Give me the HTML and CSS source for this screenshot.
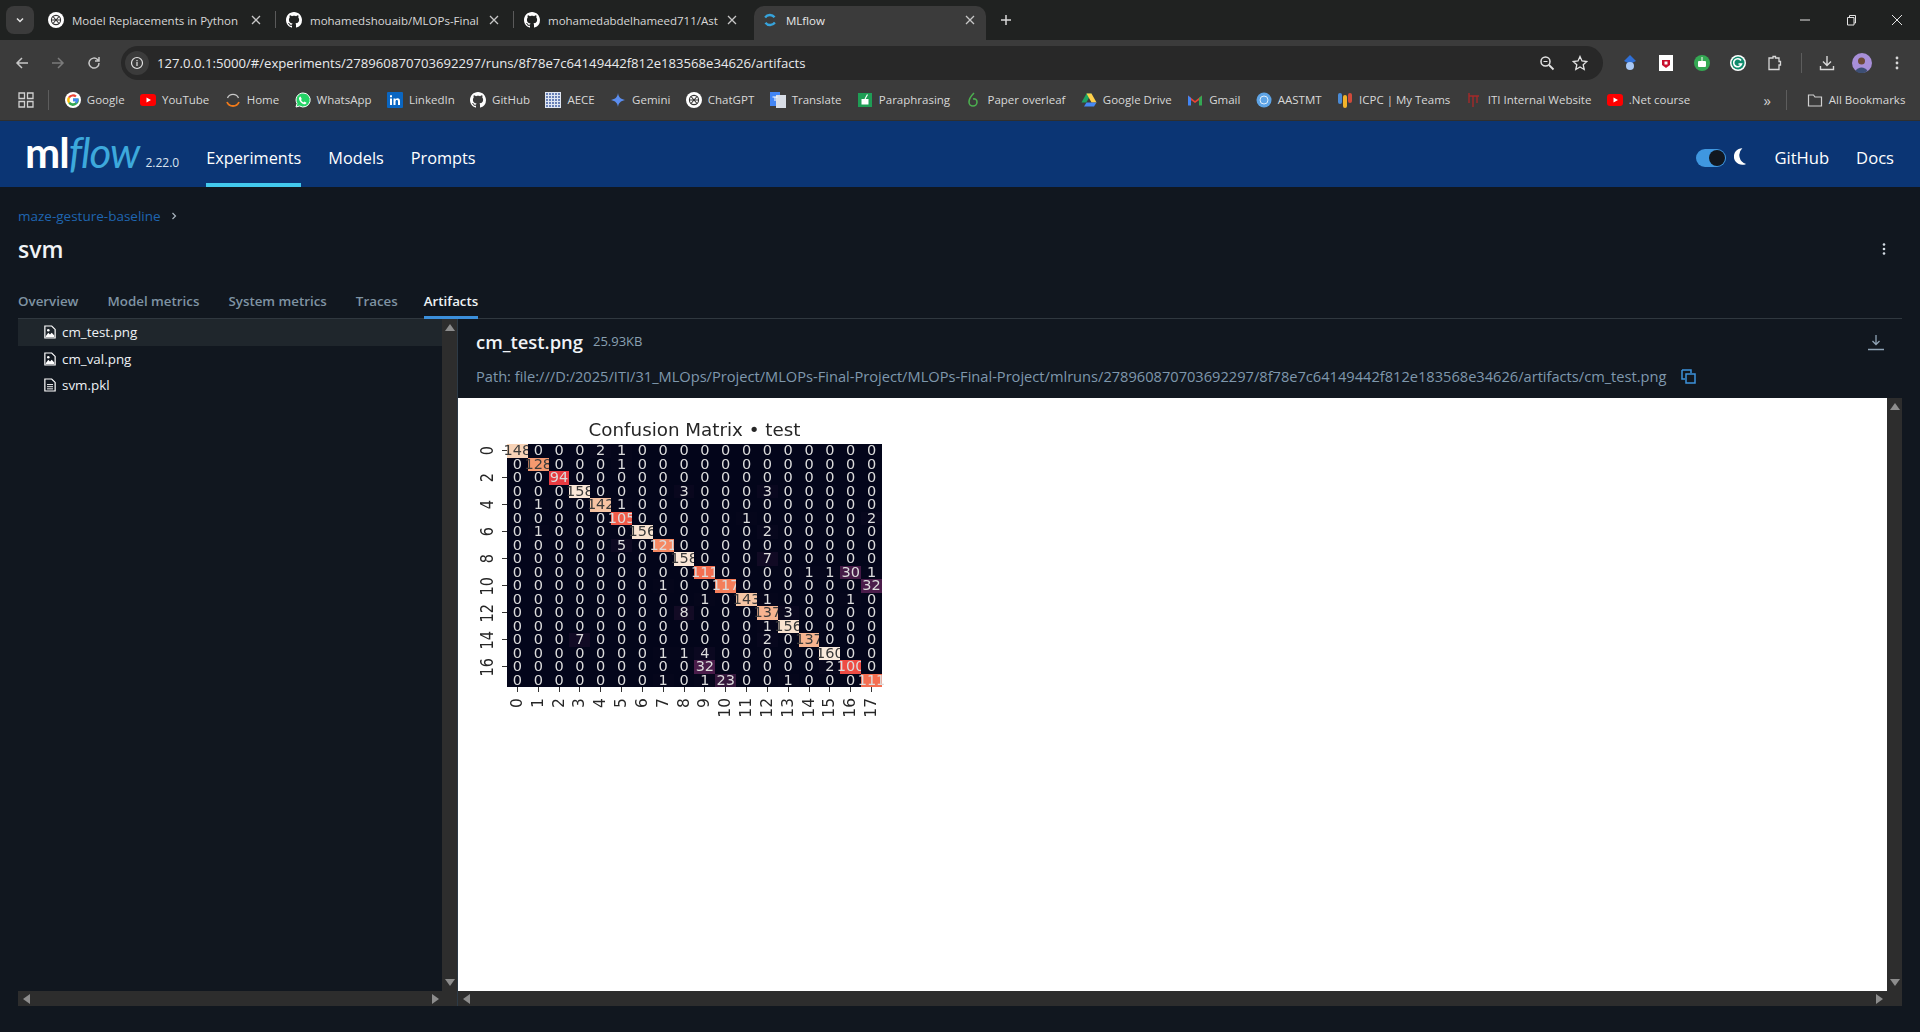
FILE: index.html
```html
<!DOCTYPE html>
<html lang="en">
<head>
	<meta charset="UTF-8">
	<title>MLflow</title>
	<link rel="stylesheet" href="styles.css">
</head>
<body>
	<svg class="defs" width="0" height="0">
		<symbol id="gh" viewBox="0 0 16 16"><path fill="#fff" d="M8 0C3.58 0 0 3.58 0 8c0 3.54 2.29 6.53 5.47 7.59.4.07.55-.17.55-.38 0-.19-.01-.82-.01-1.49-2.01.37-2.53-.49-2.69-.94-.09-.23-.48-.94-.82-1.13-.28-.15-.68-.52-.01-.53.63-.01 1.08.58 1.23.82.72 1.21 1.87.87 2.33.66.07-.52.28-.87.51-1.07-1.78-.2-3.64-.89-3.64-3.95 0-.87.31-1.59.82-2.15-.08-.2-.36-1.02.08-2.12 0 0 .67-.21 2.2.82.64-.18 1.32-.27 2-.27s1.36.09 2 .27c1.53-1.04 2.2-.82 2.2-.82.44 1.1.16 1.92.08 2.12.51.56.82 1.27.82 2.15 0 3.07-1.87 3.75-3.65 3.95.29.25.54.73.54 1.48 0 1.07-.01 1.93-.01 2.2 0 .21.15.46.55.38A8.013 8.013 0 0 0 16 8c0-4.42-3.58-8-8-8z"/></symbol>
		<symbol id="gpt" viewBox="0 0 16 16"><circle cx="8" cy="8" r="8" fill="#fff"/><g fill="none" stroke="#333" stroke-width="1.1"><circle cx="8" cy="8" r="4.6"/><path d="M5 4.5 11 11.5M11 4.5 5 11.5M3.4 8h9.2"/></g></symbol>
		<symbol id="close" viewBox="0 0 10 10"><path d="M1 1 9 9M9 1 1 9" stroke="#c7c7c7" stroke-width="1.3"/></symbol>
		<symbol id="yt" viewBox="0 0 16 16"><rect y="2" width="16" height="12" rx="3" fill="#f00"/><path d="M6.5 5.5v5L11 8z" fill="#fff"/></symbol>
		<symbol id="img" viewBox="0 0 14 16"><path d="M1 1h8l4 4v10H1z" fill="none" stroke="#fff" stroke-width="1.4"/><path d="M2 13l3-4 2 2 2-2 3 3v2H2z" fill="#fff"/><circle cx="5" cy="6" r="1.5" fill="#fff"/></symbol>
		<symbol id="doc" viewBox="0 0 14 16"><path d="M1 1h8l4 4v10H1z" fill="none" stroke="#fff" stroke-width="1.4"/><path d="M3.5 7.5h7M3.5 10h7M3.5 12.5h7" stroke="#fff" stroke-width="1.1"/></symbol>
	</svg>

	<div class="tabstrip">
		<button class="tab-menu"><svg class="i10" viewBox="0 0 10 10"><path d="M2 3.5 5 6.5 8 3.5" fill="none" stroke="#e3e3e3" stroke-width="1.5"/></svg></button>
		<div class="tab"><svg class="i16"><use href="#gpt"/></svg><span class="tab-title">Model Replacements in Python</span><svg class="tab-x"><use href="#close"/></svg></div>
		<div class="tab tab-sep"><svg class="i16"><use href="#gh"/></svg><span class="tab-title">mohamedshouaib/MLOPs-Final</span><svg class="tab-x"><use href="#close"/></svg></div>
		<div class="tab tab-sep"><svg class="i16"><use href="#gh"/></svg><span class="tab-title">mohamedabdelhameed711/Ast</span><svg class="tab-x"><use href="#close"/></svg></div>
		<div class="tab tab-active">
			<svg class="i16" viewBox="0 0 16 16"><path d="M13.5 4.500A7 7 0 0 0 2.200 4.800L4 6.300A4.600 4.600 0 0 1 11.600 6z" fill="#36a3dc"/><path d="M2.500 11.500A7 7 0 0 0 13.800 11.200L12 9.700A4.600 4.600 0 0 1 4.400 10z" fill="#36a3dc"/></svg>
			<span class="tab-title">MLflow</span><svg class="tab-x"><use href="#close"/></svg>
		</div>
		<svg class="new-tab" viewBox="0 0 12 12"><path d="M6 1v10M1 6h10" stroke="#d8d8d8" stroke-width="1.5"/></svg>
		<div class="win-controls">
			<svg class="i12" viewBox="0 0 12 12"><path d="M1 6h10" stroke="#e3e3e3"/></svg>
			<svg class="i12" viewBox="0 0 12 12"><path d="M2.500 3.500h6.500v7.500h-6.500zM4.500 3.500V1.500h6v7.500H9" fill="none" stroke="#e3e3e3"/></svg>
			<svg class="i12" viewBox="0 0 12 12"><path d="M1 1 11 11M11 1 1 11" stroke="#e3e3e3"/></svg>
		</div>
	</div>

	<div class="toolbar">
		<svg class="i16" viewBox="0 0 16 16"><path d="M14 8H3M8 3 3 8l5 5" fill="none" stroke="#c7c7c7" stroke-width="1.500"/></svg>
		<svg class="i16" viewBox="0 0 16 16"><path d="M2 8h11M8 3l5 5-5 5" fill="none" stroke="#7b7b7b" stroke-width="1.500"/></svg>
		<svg class="i16" viewBox="0 0 16 16"><path d="M13 8a5 5 0 1 1-1.500-3.500L13 6M13 2v4H9" fill="none" stroke="#c7c7c7" stroke-width="1.500"/></svg>
		<div class="omnibox">
			<span class="site-info"><svg class="i14" viewBox="0 0 14 14"><circle cx="7" cy="7" r="5.500" fill="none" stroke="#e3e3e3" stroke-width="1.200"/><path d="M7 6v4M7 4v1.200" stroke="#e3e3e3" stroke-width="1.200"/></svg></span>
			<span class="url">127.0.0.1:5000/#/experiments/278960870703692297/runs/8f78e7c64149442f812e183568e34626/artifacts</span>
			<svg class="i16" viewBox="0 0 16 16"><circle cx="6.500" cy="6.500" r="4.500" fill="none" stroke="#e3e3e3" stroke-width="1.500"/><path d="M10 10l4.500 4.500" stroke="#e3e3e3" stroke-width="1.800"/><path d="M4.500 6.500h4" stroke="#e3e3e3"/></svg>
			<svg class="i16" viewBox="0 0 16 16"><path d="M8 1.500 10 6l4.800.500-3.600 3.200 1 4.800L8 12l-4.200 2.500 1-4.800L1.200 6.500 6 6z" fill="none" stroke="#e3e3e3" stroke-width="1.300"/></svg>
		</div>
		<div class="extensions">
			<svg class="i16" viewBox="0 0 16 16"><path d="M8 0 14 6 8 9 2 6z" fill="#2f6fd6"/><circle cx="8" cy="11" r="4" fill="#a9c8f5"/></svg>
			<svg class="i16" viewBox="0 0 16 16"><rect x="1" width="14" height="16" fill="#fff"/><path d="M4 5h8v5l-4 3-4-3z" fill="#c8102e"/><path d="M6.500 6.500h3v3h-3z" fill="#fff"/></svg>
			<svg class="i16" viewBox="0 0 16 16"><circle cx="8" cy="8" r="8" fill="#34a853"/><rect x="4" y="6" width="8" height="6" rx="1" fill="#fff"/><path d="M8 2v4" stroke="#fff"/></svg>
			<svg class="i16" viewBox="0 0 16 16"><circle cx="8" cy="8" r="8" fill="#fff"/><circle cx="8" cy="8" r="6.500" fill="#0f8a6c"/><path d="M11 5.500A4 4 0 1 0 11.500 9H8.500" fill="none" stroke="#fff" stroke-width="1.600"/></svg>
			<svg class="i16" viewBox="0 0 16 16"><path d="M3 3h4V1.500h2.500V3H13v3.500h1.500V10H13v4.500H3z" fill="none" stroke="#d8d8d8" stroke-width="1.300"/></svg>
			<span class="bar-sep ext-sep"></span>
			<div class="ext-tail">
				<svg class="i16" viewBox="0 0 16 16"><path d="M8 1v9M4 6.500 8 10.500l4-4M1.500 11v3.500h13V11" fill="none" stroke="#d8d8d8" stroke-width="1.400"/></svg>
				<svg class="i20" viewBox="0 0 20 20"><circle cx="10" cy="10" r="10" fill="#a88fd8"/><circle cx="9.500" cy="8" r="3.500" fill="#6d4a38"/><path d="M3.500 18a7 7 0 0 1 12 0 10 10 0 0 1-12 0z" fill="#3d4f74"/></svg>
				<svg class="i16" viewBox="0 0 16 16"><circle cx="8" cy="3" r="1.400" fill="#d8d8d8"/><circle cx="8" cy="8" r="1.400" fill="#d8d8d8"/><circle cx="8" cy="13" r="1.400" fill="#d8d8d8"/></svg>
			</div>
		</div>
	</div>

	<div class="bookmarks">
		<svg class="i16 apps" viewBox="0 0 16 16"><path d="M1 1h5.500v5.500H1zM9.500 1H15v5.500H9.500zM1 9.500h5.500V15H1zM9.500 9.500H15V15H9.500z" fill="none" stroke="#d0d0d0" stroke-width="1.300"/></svg>
		<span class="bar-sep"></span>
		<a class="bm"><svg class="i16" viewBox="0 0 16 16"><circle cx="8" cy="8" r="8" fill="#fff"/><path d="M8 6.600h5.500A5.700 5.700 0 0 1 3.200 11.200L5 9.800A3.500 3.500 0 0 0 11 9.200H8z" fill="#34a853"/><path d="M3.200 11.200a5.700 5.700 0 0 1 0-6.400L5 6.200a3.500 3.500 0 0 0 0 3.600z" fill="#fbbc05"/><path d="M3.200 4.800a5.700 5.700 0 0 1 8.500-1L10.200 5.300A3.500 3.500 0 0 0 5 6.200z" fill="#ea4335"/><path d="M8 6.600h5.500a5.700 5.700 0 0 1-2 5L10 10.300A3 3 0 0 0 11 9.200H8z" fill="#4285f4"/></svg>Google</a>
		<a class="bm"><svg class="i16"><use href="#yt"/></svg>YouTube</a>
		<a class="bm"><svg class="i16" viewBox="0 0 16 16"><path d="M2.500 6a6 6 0 0 1 11 0" fill="none" stroke="#c8c8c8" stroke-width="1.300"/><path d="M2 10a6.500 6.500 0 0 0 12 0" fill="none" stroke="#f07a1a" stroke-width="1.800"/></svg>Home</a>
		<a class="bm"><svg class="i16" viewBox="0 0 16 16"><path d="M8 1a7 7 0 0 0-6 10.500L1 15l3.600-1A7 7 0 1 0 8 1z" fill="#25d366" stroke="#fff"/><path d="M5.500 4.500 6.800 7 6 8c.6 1.200 1.400 2 2.500 2.500l1-.900 2 1.200c-.3 1.200-1.500 1.700-2.500 1.400C6.500 11.500 4.500 9.500 4 7c-.2-1.200.5-2.200 1.500-2.500z" fill="#fff"/></svg>WhatsApp</a>
		<a class="bm"><svg class="i16" viewBox="0 0 16 16"><rect width="16" height="16" rx="1" fill="#0a66c2"/><path d="M3 6.500h2V13H3zM3 3.200h2v2H3zM6.500 6.500h2v1c.5-.8 1.200-1.200 2.100-1.200 1.700 0 2.400 1 2.400 2.900V13h-2V9.600c0-1-.3-1.600-1.200-1.600-.9 0-1.300.7-1.300 1.600V13h-2z" fill="#fff"/></svg>LinkedIn</a>
		<a class="bm"><svg class="i16"><use href="#gh"/></svg>GitHub</a>
		<a class="bm"><svg class="i16" viewBox="0 0 16 16"><rect width="16" height="16" fill="#dfe6f2"/><path d="M2 1v14M5 1v14M8 1v14M11 1v14M14 1v14" stroke="#1d3f8f" stroke-width="1.200" stroke-dasharray="2 1"/></svg>AECE</a>
		<a class="bm"><svg class="i16" viewBox="0 0 16 16"><path d="M8 1c.6 4 2.500 6 7 7-4.500 1-6.400 3-7 7-.6-4-2.500-6-7-7 4.500-1 6.400-3 7-7z" fill="#5b8def"/></svg>Gemini</a>
		<a class="bm"><svg class="i16"><use href="#gpt"/></svg>ChatGPT</a>
		<a class="bm"><svg class="i16" viewBox="0 0 16 16"><rect width="10" height="14" fill="#4285f4"/><rect x="6" y="3" width="10" height="13" fill="#d8dde6"/><path d="M2.500 5h5M5 5v4" stroke="#fff"/></svg>Translate</a>
		<a class="bm"><svg class="i16" viewBox="0 0 16 16"><path d="M1 1h14v14H1z" fill="#1f9d55"/><rect x="4.500" y="7" width="7" height="5.500" fill="#fff"/><path d="M8 7 10.500 2.500" stroke="#fff" stroke-width="1.200"/></svg>Paraphrasing</a>
		<a class="bm"><svg class="i16" viewBox="0 0 16 16"><path d="M9 1C6 4 4 6.500 4 10a4 4 0 0 0 8 0c0-2.500-2-3.500-4-3" fill="none" stroke="#4cae4f" stroke-width="1.600"/></svg>Paper overleaf</a>
		<a class="bm"><svg class="i16" viewBox="0 0 16 16"><path d="M5.500 1.500h5L5.300 10.500H.5z" fill="#1fa463"/><path d="M10.500 1.500 15.500 10.500h-5L5.500 1.500z" fill="#ffd04b"/><path d="M3 14.500 5.500 10.500h10l-2.500 4z" fill="#4688f4"/></svg>Google Drive</a>
		<a class="bm"><svg class="i16" viewBox="0 0 16 16"><path d="M1 3.500 8 9l7-5.500V6L8 11 1 6z" fill="#ea4335"/><path d="M1 13.500V3.500L4 6v7.500z" fill="#4285f4"/><path d="M15 13.500V3.500L12 6v7.500z" fill="#34a853"/></svg>Gmail</a>
		<a class="bm"><svg class="i16" viewBox="0 0 16 16"><circle cx="8" cy="8" r="7.500" fill="#5ea4e6"/><circle cx="8" cy="8" r="4" fill="none" stroke="#dcecfb"/></svg>AASTMT</a>
		<a class="bm"><svg class="i16" viewBox="0 0 16 16"><rect x="1" y="1" width="4" height="11" rx="2" fill="#4a8ad4"/><rect x="6" y="3" width="4" height="13" rx="2" fill="#f2b32a"/><rect x="11" y="1" width="4" height="10" rx="2" fill="#d04a3a"/></svg>ICPC | My Teams</a>
		<a class="bm"><svg class="i16" viewBox="0 0 16 16"><path d="M3 1v10M3 4h10M7 4v11M11 4v7" fill="none" stroke="#a52a2a" stroke-width="1.400"/></svg>ITI Internal Website</a>
		<a class="bm"><svg class="i16"><use href="#yt"/></svg>.Net course</a>
		<span class="bm-more">»</span>
		<span class="bar-sep"></span>
		<a class="bm bm-all"><svg class="i16" viewBox="0 0 16 16"><path d="M1.500 3h5l1.500 2h6.500v9h-13z" fill="none" stroke="#d0d0d0" stroke-width="1.200"/></svg>All Bookmarks</a>
	</div>

	<header class="app-header">
		<div class="logo"><span class="logo-ml">ml</span><span class="logo-flow">flow</span></div>
		<span class="version">2.22.0</span>
		<nav class="main-nav">
			<a class="nav-item nav-active">Experiments</a>
			<a class="nav-item">Models</a>
			<a class="nav-item">Prompts</a>
		</nav>
		<div class="header-right">
			<span class="toggle"><span class="knob"></span></span>
			<svg class="moon" viewBox="0 0 14 18"><path d="M9 0A9 9 0 1 0 13 17 10 10 0 0 1 9 0z" fill="#fff"/></svg>
			<a class="head-link">GitHub</a>
			<a class="head-link">Docs</a>
		</div>
	</header>

	<main class="page">
		<div class="crumbs"><a class="crumb">maze-gesture-baseline</a><svg class="crumb-sep" viewBox="0 0 8 10"><path d="M2.500 2 5.500 5 2.500 8" fill="none" stroke="#a9b4be" stroke-width="1.200"/></svg></div>
		<div class="title-row">
			<h1 class="run-name">svm</h1>
			<svg class="i16" viewBox="0 0 16 16"><circle cx="8" cy="3.500" r="1.300" fill="#d5dde4"/><circle cx="8" cy="8" r="1.300" fill="#d5dde4"/><circle cx="8" cy="12.500" r="1.300" fill="#d5dde4"/></svg>
		</div>
		<div class="run-tabs">
			<a class="run-tab">Overview</a>
			<a class="run-tab">Model metrics</a>
			<a class="run-tab">System metrics</a>
			<a class="run-tab">Traces</a>
			<a class="run-tab run-tab-active">Artifacts</a>
		</div>

		<section class="artifacts">
			<div class="tree-col">
				<div class="tree-body">
					<ul class="tree">
						<li class="tree-row tree-row-active"><svg class="file-icon"><use href="#img"/></svg>cm_test.png</li>
						<li class="tree-row"><svg class="file-icon"><use href="#img"/></svg>cm_val.png</li>
						<li class="tree-row"><svg class="file-icon"><use href="#doc"/></svg>svm.pkl</li>
					</ul>
					<div class="vbar"><span class="arr arr-up"></span><span class="arr arr-down"></span></div>
				</div>
				<div class="hbar"><span class="arr arr-left"></span><span class="arr arr-right"></span></div>
			</div>

			<div class="viewer">
				<div class="viewer-head">
					<div class="file-line">
						<span class="file-name">cm_test.png</span>
						<span class="file-size">25.93KB</span>
						<svg class="dl-icon" viewBox="0 0 16 16"><path d="M8 0v9M4.500 6 8 9.500 11.500 6" fill="none" stroke="#8fa3b5" stroke-width="1.300"/><path d="M0 14.500h16" stroke="#8fa3b5" stroke-width="1.500"/></svg>
					</div>
					<div class="path-line">
						<span class="path-text">Path: file:///D:/2025/ITI/31_MLOps/Project/MLOPs-Final-Project/MLOPs-Final-Project/mlruns/278960870703692297/8f78e7c64149442f812e183568e34626/artifacts/cm_test.png</span>
						<svg class="copy-icon" viewBox="0 0 15 15"><path d="M1 1h9v3M4 10H1V1" fill="none" stroke="#3c92dc" stroke-width="1.500"/><path d="M5 5h9v9H5z" fill="none" stroke="#3c92dc" stroke-width="1.500"/></svg>
					</div>
				</div>
				<div class="viewer-body">
					<div class="canvas">
						<div class="figure" id="figure">
							<div class="fig-title">Confusion Matrix • test</div>
							<div class="y-axis" id="yaxis"></div>
							<div class="matrix" id="matrix"></div>
							<div class="x-axis" id="xaxis"></div>
						</div>
					</div>
					<div class="vbar"><span class="arr arr-up"></span><span class="arr arr-down"></span></div>
				</div>
				<div class="hbar"><span class="arr arr-left"></span><span class="arr arr-right arr-right-far"></span></div>
			</div>
		</section>
	</main>
	<script src="matrix.js"></script>
</body>
</html>
```

FILE: styles.css
```css
* {
	box-sizing: border-box;
}
html, body {
	margin: 0;
	height: 100%;
	overflow: hidden;
}
body {
	display: flex;
	flex-direction: column;
	background: #11171f;
	font-family: "Open Sans", "Noto Sans", sans-serif;
	color: #e8ecf0;
}
svg {
	flex: none;
	display: block;
}
.defs {
	position: absolute;
}
.i10 { width: 10px; height: 10px; }
.i12 { width: 12px; height: 12px; }
.i14 { width: 14px; height: 14px; }
.i16 { width: 16px; height: 16px; }
.i20 { width: 20px; height: 20px; }

/* browser chrome */
.tabstrip {
	display: flex;
	align-items: flex-end;
	height: 40px;
	padding-left: 6px;
	background: #202221;
}
.tab-menu {
	align-self: flex-start;
	display: flex;
	align-items: center;
	justify-content: center;
	width: 28px;
	height: 28px;
	margin: 6px 6px 0 0;
	padding: 0;
	border: 0;
	border-radius: 8px;
	background: #3b3b3b;
}
.tab {
	position: relative;
	display: flex;
	align-items: center;
	width: 238px;
	height: 34px;
	padding: 0 17px 6px 8px;
	font-size: 11.500px;
	color: #d8d8d8;
}
.tab-sep::before {
	content: "";
	position: absolute;
	left: -3px;
	top: 5px;
	width: 1px;
	height: 17px;
	background: #5a5a5a;
}
.tab-title {
	flex: 1;
	min-width: 0;
	margin: 0 4px 0 8px;
	white-space: nowrap;
}
.tab-x {
	width: 10px;
	height: 10px;
}
.tab-active {
	width: 232px;
	padding-right: 11px;
	border-radius: 10px 10px 0 0;
	background: #3b3b3b;
	color: #e8e8e8;
}
.new-tab {
	width: 12px;
	height: 12px;
	margin: 0 0 14px 14px;
}
.win-controls {
	align-self: center;
	display: flex;
	gap: 34px;
	margin-left: auto;
	padding-right: 17px;
}
.toolbar {
	display: flex;
	align-items: center;
	gap: 20px;
	height: 40px;
	padding: 6px 0 0 14px;
	background: #3b3b3b;
}
.omnibox {
	flex: none;
	align-self: flex-end;
	display: flex;
	align-items: center;
	gap: 17px;
	width: 1482px;
	height: 34px;
	margin-left: -1px;
	padding: 0 15px 0 4px;
	border-radius: 17px;
	background: #282828;
}
.site-info {
	display: flex;
	align-items: center;
	justify-content: center;
	width: 24px;
	height: 24px;
	border-radius: 50%;
	background: #3b3b3b;
	margin-right: -9px;
}
.url {
	flex: 1;
	font-size: 13.150px;
	color: #e8eaed;
	white-space: nowrap;
}
.extensions {
	display: flex;
	align-items: center;
	gap: 20px;
	margin-left: -1px;
}
.ext-sep {
	margin-left: -1px;
	margin-right: -3px;
}
.ext-tail {
	display: flex;
	align-items: center;
	gap: 17px;
}
.bar-sep {
	flex: none;
	width: 1px;
	height: 20px;
	background: #5d5d5d;
}
.bookmarks {
	display: flex;
	align-items: center;
	height: 41px;
	padding: 0 14px 1px 18px;
	gap: 15.400px;
	border-bottom: 1px solid #2f2f2f;
	background: #3b3b3b;
}
.apps {
	margin-right: -1px;
}
.bm {
	display: flex;
	align-items: center;
	gap: 6px;
	font-size: 11.500px;
	color: #d8d8d8;
	white-space: nowrap;
}
.bm-more {
	margin-left: 58px;
	font-size: 15px;
	color: #d0d0d0;
}
.bm-all {
	margin-left: 4px;
}

/* mlflow header */
.app-header {
	display: flex;
	align-items: stretch;
	height: 66px;
	padding: 0 26px 0 25px;
	background: #0b3574;
}
.logo {
	align-self: center;
	font-size: 42px;
	line-height: 46px;
	letter-spacing: -1px;
	margin-top: -4px;
}
.logo-ml {
	font-family: "Lato", sans-serif;
	font-weight: 700;
	color: #fff;
}
.logo-flow {
	font-family: "Lato", sans-serif;
	font-style: italic;
	font-weight: 400;
	color: #3da9dc;
}
.version {
	align-self: center;
	margin: 16px 0 0 6px;
	font-size: 12px;
	color: #d9e3ef;
}
.main-nav {
	display: flex;
	gap: 27px;
	margin-left: 27px;
}
.nav-item {
	display: flex;
	align-items: center;
	border-bottom: 4px solid transparent;
	padding-top: 12px;
	font-size: 16.300px;
	color: #fff;
}
.nav-active {
	border-bottom-color: #43c9ed;
}
.header-right {
	display: flex;
	align-items: center;
	margin-left: auto;
	padding-top: 7px;
}
.toggle {
	display: flex;
	justify-content: flex-end;
	align-items: center;
	width: 30px;
	height: 18px;
	padding-right: 1px;
	border-radius: 9px;
	background: #3f97e0;
}
.knob {
	width: 16px;
	height: 16px;
	border-radius: 50%;
	background: #11171f;
}
.moon {
	width: 13px;
	height: 17px;
	margin: -2px 27px 0 8px;
}
.head-link {
	font-size: 16.600px;
	color: #fff;
}
.head-link + .head-link {
	margin-left: 27px;
}

/* run page */
.page {
	flex: 1;
	min-height: 0;
	display: flex;
	flex-direction: column;
	padding: 19px 18px 26px 18px;
}
.crumbs {
	display: flex;
	align-items: center;
	gap: 9px;
	height: 19px;
	font-size: 13.500px;
}
.crumb {
	color: #1f65b0;
}
.crumb-sep {
	width: 8px;
	height: 10px;
}
.title-row {
	display: flex;
	align-items: center;
	justify-content: space-between;
	padding-right: 10px;
	height: 32px;
	margin-top: 8px;
}
.run-name {
	margin: 0;
	font-size: 23px;
	font-weight: 600;
	line-height: 32px;
	color: #f0f3f6;
}
.run-tabs {
	display: flex;
	gap: 29px;
	margin-top: 27px;
	height: 27px;
	border-bottom: 1px solid #30383f;
}
.run-tab {
	height: 27px;
	font-size: 13.350px;
	font-weight: 600;
	line-height: 18px;
	color: #7f93a3;
}
.run-tab-active {
	margin-left: -3px;
	border-bottom: 3px solid #3b8fdb;
	color: #eef2f5;
}
.artifacts {
	flex: 1;
	min-height: 0;
	display: flex;
}
.tree-col {
	flex: none;
	display: flex;
	flex-direction: column;
	width: 440px;
	border-right: 1px solid #2d3a46;
}
.tree-body {
	flex: 1;
	min-height: 0;
	display: flex;
}
.tree {
	flex: 1;
	margin: 0;
	padding: 0;
	list-style: none;
}
.tree-row {
	display: flex;
	align-items: center;
	gap: 6px;
	height: 26.500px;
	padding-left: 26px;
	font-size: 13.400px;
	color: #eef2f5;
}
.tree-row-active {
	background: #1f262c;
}
.file-icon {
	width: 12px;
	height: 14px;
}
.viewer {
	flex: 1;
	min-width: 0;
	display: flex;
	flex-direction: column;
}
.viewer-head {
	height: 79px;
	padding: 10px 18px 0 18px;
}
.file-line {
	display: flex;
	align-items: baseline;
	gap: 10px;
	height: 24px;
}
.file-name {
	font-size: 18.400px;
	font-weight: 600;
	color: #f0f3f6;
}
.file-size {
	position: relative;
	top: -3px;
	font-size: 13px;
	color: #8aa0b2;
}
.dl-icon {
	align-self: center;
	width: 16px;
	height: 16px;
	margin-top: 4px;
	margin-left: auto;
}
.path-line {
	display: flex;
	align-items: center;
	gap: 15px;
	margin-top: 13px;
	height: 20px;
}
.path-text {
	font-size: 14.630px;
	color: #7f98ad;
	white-space: nowrap;
}
.copy-icon {
	width: 15px;
	height: 15px;
}
.viewer-body {
	flex: 1;
	min-height: 0;
	display: flex;
}
.canvas {
	flex: 1;
	background: #fff;
}
.vbar {
	flex: none;
	display: flex;
	flex-direction: column;
	justify-content: space-between;
	align-items: center;
	width: 15px;
	padding: 5px 0;
	background: #2d2d2d;
}
.hbar {
	flex: none;
	display: flex;
	justify-content: space-between;
	align-items: center;
	height: 15px;
	padding: 0 18px 0 5px;
	background: #2d2d2d;
}
.arr {
	width: 0;
	height: 0;
	border-style: solid;
	border-color: transparent;
}
.arr-up {
	border-width: 0 5px 7px;
	border-bottom-color: #8d8d8d;
}
.arr-down {
	border-width: 7px 5px 0;
	border-top-color: #8d8d8d;
}
.arr-left {
	border-width: 5px 7px 5px 0;
	border-right-color: #8d8d8d;
}
.arr-right {
	border-width: 5px 0 5px 7px;
	border-left-color: #8d8d8d;
}
.arr-right-far {
	margin-right: 1px;
}

/* confusion matrix picture */
.figure {
	display: grid;
	grid-template-columns: 49px 375px;
	grid-template-rows: 46px 243px auto;
	filter: blur(0.5px);
	font-family: "DejaVu Sans", sans-serif;
	color: #262626;
}
.fig-title {
	grid-column: 2;
	align-self: end;
	padding-bottom: 3px;
	text-align: center;
	font-size: 18.300px;
	line-height: 22px;
	white-space: nowrap;
}
.y-axis {
	grid-column: 1;
	grid-row: 2;
	display: grid;
	grid-template-rows: repeat(18, 13.500px);
}
.y-tick {
	display: flex;
	align-items: center;
	justify-content: flex-end;
	gap: 8px;
}
.y-label {
	writing-mode: vertical-rl;
	transform: rotate(180deg) scaleX(1.2);
	font-size: 14.500px;
	line-height: 14px;
}
.y-mark {
	width: 5px;
	height: 1px;
	background: #333;
}
.matrix {
	grid-column: 2;
	grid-row: 2;
	display: grid;
	grid-template-columns: repeat(18, 20.833px);
	grid-template-rows: repeat(18, 13.500px);
}
.cell {
	display: flex;
	align-items: center;
	justify-content: center;
	font-size: 14.500px;
	line-height: 13.500px;
	color: #dcdcdc;
	white-space: nowrap;
}
.cell-dark {
	color: #3a3a3a;
}
.x-axis {
	grid-column: 2;
	grid-row: 3;
	display: grid;
	grid-template-columns: repeat(18, 20.833px);
}
.x-tick {
	display: flex;
	flex-direction: column;
	align-items: center;
	gap: 6px;
}
.x-mark {
	width: 1px;
	height: 5px;
	background: #333;
}
.x-label {
	writing-mode: vertical-rl;
	transform: rotate(180deg);
	font-size: 15.500px;
	line-height: 15px;
}
```

FILE: matrix.js
```js
var rows = [
	[148,0,0,0,2,1,0,0,0,0,0,0,0,0,0,0,0,0],
	[0,128,0,0,0,1,0,0,0,0,0,0,0,0,0,0,0,0],
	[0,0,94,0,0,0,0,0,0,0,0,0,0,0,0,0,0,0],
	[0,0,0,158,0,0,0,0,3,0,0,0,3,0,0,0,0,0],
	[0,1,0,0,142,1,0,0,0,0,0,0,0,0,0,0,0,0],
	[0,0,0,0,0,105,0,0,0,0,0,1,0,0,0,0,0,2],
	[0,1,0,0,0,0,156,0,0,0,0,0,2,0,0,0,0,0],
	[0,0,0,0,0,5,0,121,0,0,0,0,0,0,0,0,0,0],
	[0,0,0,0,0,0,0,0,158,0,0,0,7,0,0,0,0,0],
	[0,0,0,0,0,0,0,0,0,111,0,0,0,0,1,1,30,1],
	[0,0,0,0,0,0,0,1,0,0,117,0,0,0,0,0,0,32],
	[0,0,0,0,0,0,0,0,0,1,0,143,1,0,0,0,1,0],
	[0,0,0,0,0,0,0,0,8,0,0,0,137,3,0,0,0,0],
	[0,0,0,0,0,0,0,0,0,0,0,0,1,156,0,0,0,0],
	[0,0,0,7,0,0,0,0,0,0,0,0,2,0,137,0,0,0],
	[0,0,0,0,0,0,0,1,1,4,0,0,0,0,0,160,0,0],
	[0,0,0,0,0,0,0,0,0,32,0,0,0,0,0,2,100,0],
	[0,0,0,0,0,0,0,1,0,1,23,0,0,1,0,0,0,111]
];

// rocket colormap, stops every 0.1
var stops = [
	[3,5,26],[34,17,48],[74,28,74],[112,31,87],[160,28,91],
	[203,27,79],[236,63,63],[244,113,81],[245,153,111],[246,201,169],[250,235,221]
];

function color(v){
	var t = Math.min(v / 160, 1) * 10;
	var i = Math.min(Math.floor(t), 9);
	var f = t - i;
	var c = stops[i].map(function(s, n){
		return Math.round(s + (stops[i + 1][n] - s) * f);
	});
	return 'rgb(' + c.join(',') + ')';
}

var matrix = document.getElementById('matrix');
var yaxis = document.getElementById('yaxis');
var xaxis = document.getElementById('xaxis');

rows.forEach(function(row, r){
	row.forEach(function(v){
		var cell = document.createElement('div');
		cell.className = v > 125 ? 'cell cell-dark' : 'cell';
		cell.style.background = color(v);
		cell.textContent = v;
		matrix.appendChild(cell);
	});

	var yt = document.createElement('div');
	yt.className = 'y-tick';
	if( r % 2 == 0 ){
		yt.innerHTML = '<span class="y-label">' + r + '</span><span class="y-mark"></span>';
	}
	yaxis.appendChild(yt);

	var xt = document.createElement('div');
	xt.className = 'x-tick';
	xt.innerHTML = '<span class="x-mark"></span><span class="x-label">' + r + '</span>';
	xaxis.appendChild(xt);
});
```
